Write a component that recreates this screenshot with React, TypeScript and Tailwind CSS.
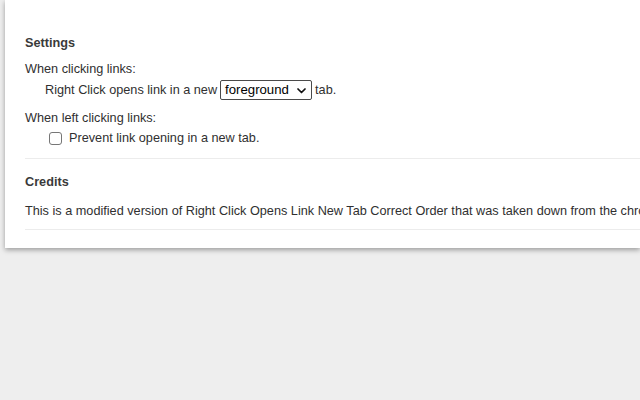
import React from "react";

export default function App() {
  return (
    <div
      className="w-[640px] h-[400px] bg-[#eeeeee] overflow-hidden text-[#303030]"
      style={{ fontFamily: '"Liberation Sans", Arial, sans-serif' }}
    >
      <div className="ml-[5px] h-[248px] bg-white shadow-[0_2px_5px_rgba(0,0,0,0.35)] pl-5 pt-[35px] overflow-hidden whitespace-nowrap">
        <div className="text-[12.7px] leading-4 font-bold text-[#3a3a3a]">Settings</div>
        <div className="mt-[10px] text-[12.7px] leading-4">When clicking links:</div>
        <div className="mt-[3px] h-5 flex items-center pl-5 text-[12.7px] leading-4">
          <span>Right Click opens link in a new</span>
          <div className="ml-[3px] w-[92px] h-5 border border-[#4a4a4a] rounded-[2px] flex items-center pl-[4px] pr-[5px] text-[13.2px] text-black">
            <span className="flex-1">foreground</span>
            <svg width="9" height="6" viewBox="0 0 9 6" className="mt-[1px]">
              <path d="M1 1 L4.5 4.5 L8 1" fill="none" stroke="#111" strokeWidth="1.7" strokeLinecap="round" strokeLinejoin="round" />
            </svg>
          </div>
          <span className="ml-[3px]">tab.</span>
        </div>
        <div className="mt-[10px] text-[12.7px] leading-4">When left clicking links:</div>
        <div className="mt-1 h-4 flex items-center pl-6 text-[12.7px] leading-4">
          <span className="w-[13px] h-[13px] border border-[#767676] rounded-[3px] bg-white" />
          <span className="ml-[7px]">Prevent link opening in a new tab.</span>
        </div>
        <div className="mt-[12px] border-t border-[#ececec]" />
        <div className="mt-[15px] text-[12.7px] leading-4 font-bold text-[#3a3a3a]">Credits</div>
        <div className="mt-[13px] text-[12.7px] leading-4">
          This is a modified version of Right Click Opens Link New Tab Correct Order that was taken down from the chrome web store.
        </div>
        <div className="mt-[10px] border-t border-[#ececec]" />
      </div>
    </div>
  );
}
